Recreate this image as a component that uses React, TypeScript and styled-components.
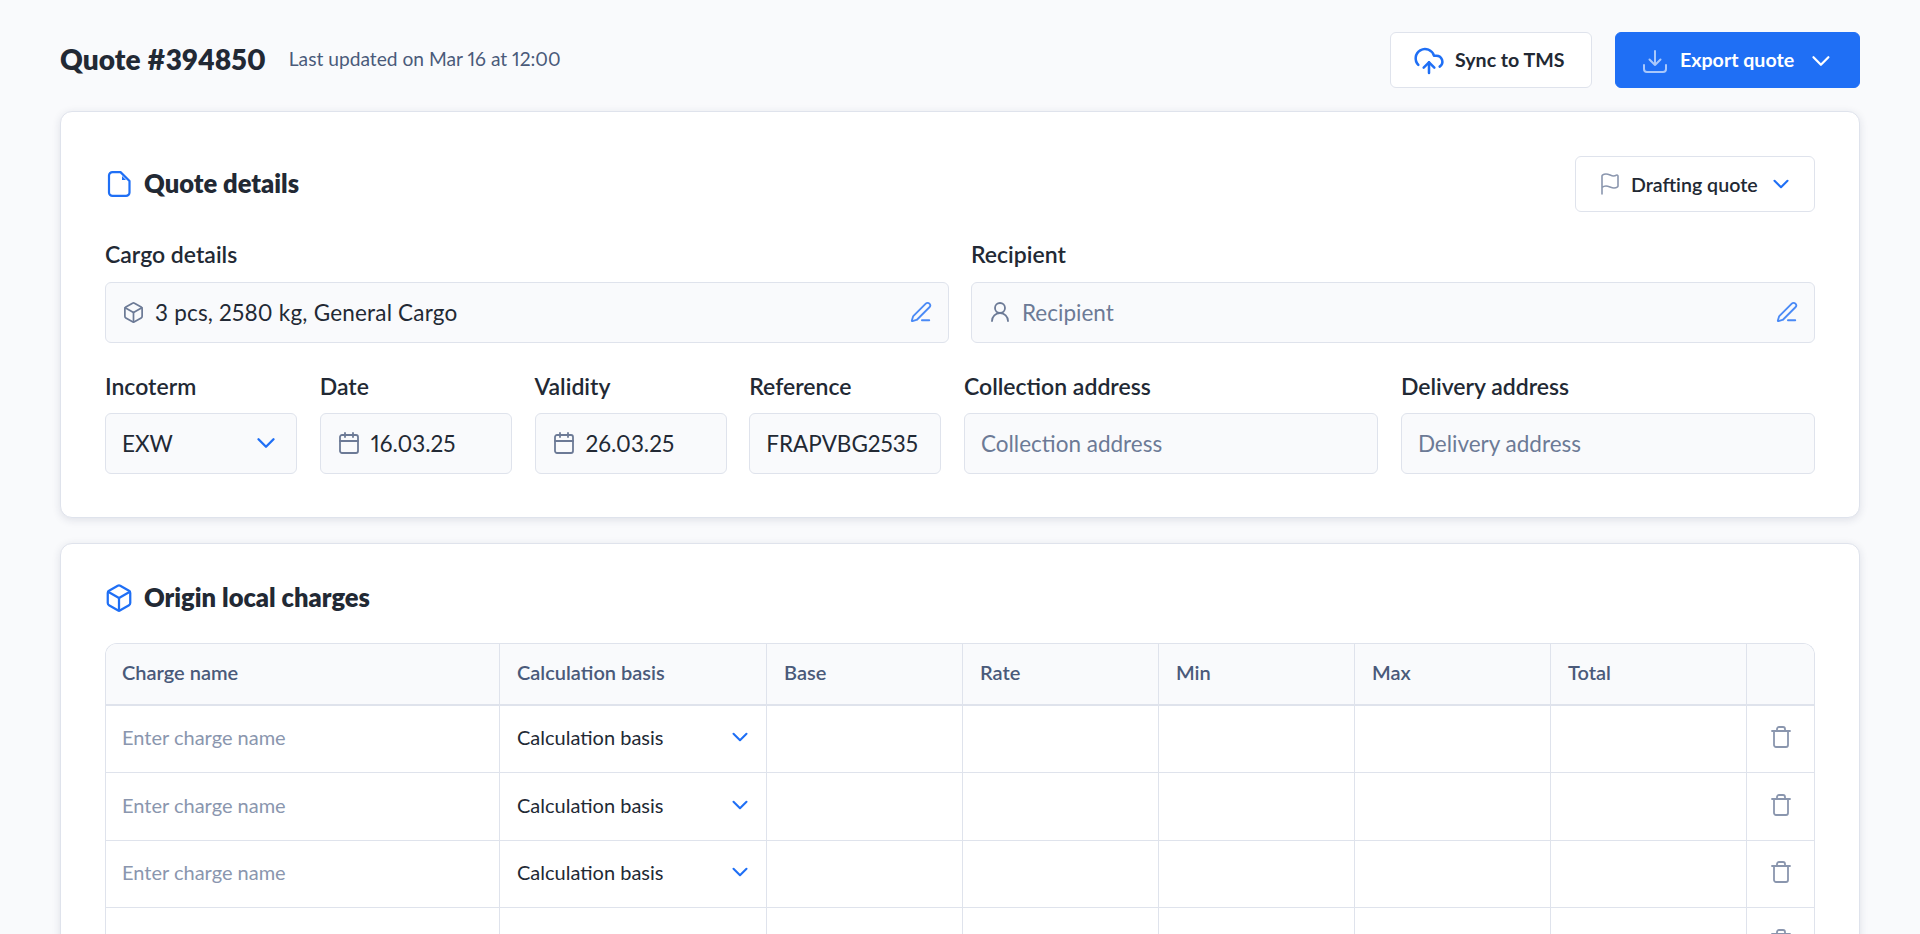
import * as React from "react";
import styled, { createGlobalStyle } from "styled-components";
import {
  Box,
  Calendar,
  ChevronDown,
  CloudUpload,
  Flag,
  PenLine,
  Trash,
  UserRound,
} from "lucide-react";

const blue = "#1f6ff5";
const ink = "#222934";
const slate = "#4a5a7a";
const muted = "#6c7a96";
const faint = "#8a96ae";
const line = "#dfe3ec";
const wash = "#f9fafc";

const GlobalStyle = createGlobalStyle`
  html, body {
    margin: 0;
    height: 100%;
    overflow: hidden;
    background: ${wash};
  }
  body {
    font-family: "Lato", "Liberation Sans", sans-serif;
    color: ${ink};
    font-variant-numeric: proportional-nums;
  }
  * {
    box-sizing: border-box;
  }
`;

const Page = styled.div`
  height: 934px;
  overflow: hidden;
  padding: 32px 60px 0;
`;

const Header = styled.header`
  display: flex;
  align-items: center;
  height: 56px;
  margin-bottom: 23px;
`;

const Title = styled.h1`
  margin: -2px 0 0;
  font-size: 28px;
  font-weight: 800;
  line-height: 1;
  letter-spacing: 0.05px;
`;

const Updated = styled.span`
  margin-left: 23px;
  margin-top: -4px;
  font-size: 19.2px;
  color: ${slate};
`;

const Actions = styled.div`
  display: flex;
  gap: 23px;
  margin-left: auto;
`;

const Button = styled.button<{ $primary?: boolean }>`
  display: flex;
  align-items: center;
  height: 56px;
  border: 1px solid ${(p) => (p.$primary ? blue : line)};
  border-radius: 6px;
  background: ${(p) => (p.$primary ? blue : "#fff")};
  color: ${(p) => (p.$primary ? "#fff" : ink)};
  font: 700 19.6px "Lato", sans-serif;
  padding-bottom: 3px;
  white-space: nowrap;
`;

const SyncButton = styled(Button)`
  width: 202px;
  gap: 10px;
  padding-left: 22px;
  svg {
    color: ${blue};
    flex: none;
    margin-top: 3px;
  }
`;

const ExportButton = styled(Button)`
  width: 245px;
  gap: 12px;
  padding-left: 26px;
  padding-right: 23px;
  svg:last-child {
    margin-left: auto;
    margin-top: 3px;
  }
`;

const ExportIcon = styled.svg`
  width: 26px;
  height: 26px;
  flex: none;
  margin-top: 3px;
  fill: none;
  stroke: #fff;
  stroke-opacity: 0.62;
  stroke-width: 2;
  stroke-linecap: round;
  stroke-linejoin: round;
`;

const Card = styled.section`
  padding: 44px 44px 43px;
  border: 1px solid ${line};
  border-radius: 12px;
  background: #fff;
  box-shadow: 0 2px 8px rgba(30, 45, 80, 0.12);
  & + & {
    margin-top: 25px;
  }
`;

const TableCard = styled(Card)`
  padding-top: 34px;
`;

const CardTop = styled.div`
  display: flex;
  align-items: center;
  height: 56px;
  margin-bottom: 30px;
`;

const TableTop = styled(CardTop)`
  height: 40px;
  margin-bottom: 25px;
`;

const CardTitle = styled.h2`
  display: flex;
  align-items: center;
  gap: 10px;
  margin: 0;
  font-size: 25.5px;
  font-weight: 800;
  svg {
    margin-left: -1px;
    color: ${blue};
    flex: none;
  }
  span {
    margin-top: -3px;
  }
`;

const FileIcon = styled.svg`
  width: 30px;
  height: 30px;
  fill: none;
  stroke: currentColor;
  stroke-width: 2.2;
  stroke-linejoin: round;
`;

const StatusButton = styled.button`
  display: flex;
  align-items: center;
  width: 240px;
  height: 56px;
  margin-left: auto;
  padding: 0 20px 0 22px;
  border: 1px solid ${line};
  border-radius: 6px;
  background: #fff;
  color: ${ink};
  font: 600 19.6px "Lato", sans-serif;
  svg:first-child {
    color: ${faint};
    margin-right: 9px;
  }
  svg:last-child {
    color: ${blue};
    margin-left: auto;
  }
`;

const TwoCols = styled.div`
  display: grid;
  grid-template-columns: 1fr 1fr;
  gap: 22px;
  margin-bottom: 30px;
`;

const Field = styled.div`
  display: flex;
  flex-direction: column;
  min-width: 0;
`;

const Label = styled.label`
  height: 40px;
  font-size: 23px;
  font-weight: 600;
  line-height: 25px;
`;

const SixCols = styled.div`
  display: grid;
  grid-template-columns: repeat(4, 192px) 1fr 1fr;
  gap: 22.75px;
  ${Label} {
    padding-top: 1px;
  }
`;

const InputBox = styled.div<{ $empty?: boolean }>`
  display: flex;
  align-items: center;
  gap: 10px;
  height: 61px;
  padding: 0 16px 1px;
  border: 1px solid ${line};
  border-radius: 6px;
  background: ${wash};
  color: ${(p) => (p.$empty ? muted : ink)};
  font-size: 22.5px;
  white-space: nowrap;
  > svg {
    color: ${muted};
    flex: none;
  }
`;

const CargoValue = styled.span`
  letter-spacing: 0.2px;
`;

const EditIcon = styled(PenLine)`
  && {
    margin-left: auto;
    color: ${blue};
    opacity: 0.8;
  }
`;

const SelectIcon = styled(ChevronDown)`
  && {
    margin-left: auto;
    margin-right: -1px;
    color: ${blue};
  }
`;

const Table = styled.div`
  border: 1px solid ${line};
  border-bottom: none;
  border-radius: 12px 12px 0 0;
  overflow: hidden;
`;

const Row = styled.div`
  display: grid;
  grid-template-columns: 394px 267px repeat(5, 196px) 1fr;
  height: 67.5px;
  border-bottom: 1px solid ${line};
`;

const HeadRow = styled(Row)`
  height: 61.5px;
  background: ${wash};
  border-bottom-width: 2px;
`;

const Cell = styled.div`
  display: flex;
  align-items: center;
  padding: 0 17px 3px;
  border-right: 1px solid ${line};
  min-width: 0;
  font-size: 20px;
  &:first-child {
    padding-left: 16px;
  }
  &:last-child {
    border-right: none;
  }
`;

const HeadCell = styled(Cell)`
  color: ${slate};
  font-weight: 600;
  padding-bottom: 4px;
`;

const NameCell = styled(Cell)`
  color: ${faint};
`;

const BasisCell = styled(Cell)`
  justify-content: space-between;
  padding-right: 13px;
  svg {
    color: ${blue};
  }
`;

const TrashCell = styled(Cell)`
  justify-content: center;
  padding: 0 0 3px;
  svg {
    color: ${faint};
  }
`;

const columns = ["Charge name", "Calculation basis", "Base", "Rate", "Min", "Max", "Total", ""];

const App: React.FunctionComponent = (): JSX.Element => {
  return (
    <Page>
      <GlobalStyle />
      <Header>
        <Title>Quote #394850</Title>
        <Updated>Last updated on Mar 16 at 12:00</Updated>
        <Actions>
          <SyncButton>
            <CloudUpload size={32} strokeWidth={1.9} />
            Sync to TMS
          </SyncButton>
          <ExportButton $primary>
            <ExportIcon viewBox="0 0 26 26">
              <path d="M13 3v14M7.5 11.5 13 17l5.5-5.5" />
              <path d="M2 17v4a3 3 0 0 0 3 3h16a3 3 0 0 0 3-3v-4" />
            </ExportIcon>
            Export quote
            <ChevronDown size={30} strokeWidth={1.8} />
          </ExportButton>
        </Actions>
      </Header>

      <Card>
        <CardTop>
          <CardTitle>
            <FileIcon viewBox="0 0 30 30">
              <path d="M8.5 3.1h8L25.5 12v11.4a3.5 3.5 0 0 1-3.5 3.5H8.5a3.5 3.5 0 0 1-3.5-3.5V6.6a3.5 3.5 0 0 1 3.5-3.5Z" />
              <path d="M18 7v4h4Z" fill="currentColor" stroke="none" />
            </FileIcon>
            <span>Quote details</span>
          </CardTitle>
          <StatusButton>
            <Flag size={24} strokeWidth={1.6} />
            Drafting quote
            <ChevronDown size={26} strokeWidth={1.9} />
          </StatusButton>
        </CardTop>

        <TwoCols>
          <Field>
            <Label>Cargo details</Label>
            <InputBox>
              <Box size={23} strokeWidth={1.8} />
              <CargoValue>3 pcs, 2580 kg, General Cargo</CargoValue>
              <EditIcon size={22} strokeWidth={2} />
            </InputBox>
          </Field>
          <Field>
            <Label>Recipient</Label>
            <InputBox $empty>
              <UserRound size={24} strokeWidth={1.8} />
              Recipient
              <EditIcon size={22} strokeWidth={2} />
            </InputBox>
          </Field>
        </TwoCols>

        <SixCols>
          <Field>
            <Label>Incoterm</Label>
            <InputBox>
              EXW
              <SelectIcon size={30} strokeWidth={1.9} />
            </InputBox>
          </Field>
          <Field>
            <Label>Date</Label>
            <InputBox>
              <Calendar size={24} strokeWidth={1.8} />
              16.03.25
            </InputBox>
          </Field>
          <Field>
            <Label>Validity</Label>
            <InputBox>
              <Calendar size={24} strokeWidth={1.8} />
              26.03.25
            </InputBox>
          </Field>
          <Field>
            <Label>Reference</Label>
            <InputBox>FRAPVBG2535</InputBox>
          </Field>
          <Field>
            <Label>Collection address</Label>
            <InputBox $empty>Collection address</InputBox>
          </Field>
          <Field>
            <Label>Delivery address</Label>
            <InputBox $empty>Delivery address</InputBox>
          </Field>
        </SixCols>
      </Card>

      <TableCard>
        <TableTop>
          <CardTitle>
            <Box size={30} strokeWidth={1.8} />
            <span>Origin local charges</span>
          </CardTitle>
        </TableTop>
        <Table>
          <HeadRow>
            {columns.map((name, i) => (
              <HeadCell key={i}>{name}</HeadCell>
            ))}
          </HeadRow>
          {[0, 1, 2, 3].map((row) => (
            <Row key={row}>
              <NameCell>Enter charge name</NameCell>
              <BasisCell>
                Calculation basis
                <ChevronDown size={26} strokeWidth={1.9} />
              </BasisCell>
              <Cell />
              <Cell />
              <Cell />
              <Cell />
              <Cell />
              <TrashCell>
                <Trash size={24} strokeWidth={1.8} />
              </TrashCell>
            </Row>
          ))}
        </Table>
      </TableCard>
    </Page>
  );
};

export default App;
